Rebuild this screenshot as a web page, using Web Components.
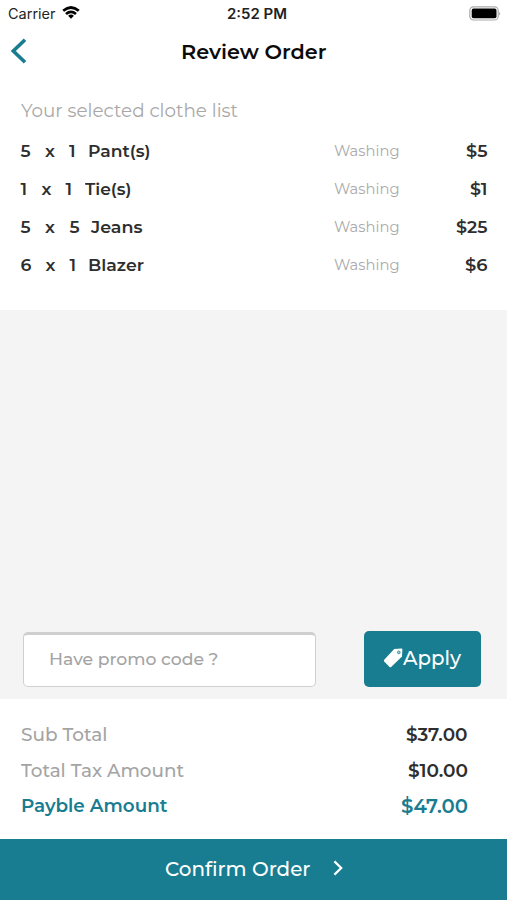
<!DOCTYPE html>
<html lang="en">
<head>
<meta charset="utf-8">
<title>Review Order</title>
<style>
html,body{margin:0;height:100%}
body{font-family:Montserrat,Inter,"Liberation Sans",sans-serif;color:#2e2e2e;background:#fff;overflow:hidden}
</style>
</head>
<body>
<review-page></review-page>
<script>
const define = (name, html, setup) => customElements.define(name, class extends HTMLElement {
  connectedCallback() {
    if (this.shadowRoot) return;
    const t = document.createElement('template');
    t.innerHTML = html;
    this.attachShadow({mode: 'open'}).append(t.content.cloneNode(true));
    if (setup) setup(this, this.shadowRoot);
  }
});

// One line of text; "s" is the font size, and "w", when given, the width it is stretched to.
define('fit-text', `<style>
:host{display:inline-block;white-space:pre;line-height:24px;height:24px;flex:none}
span{display:inline-block;transform-origin:0 50%}
</style><span><slot></slot></span>`, (el, root) => {
  el.style.fontSize = el.getAttribute('s') + 'px';
  const w = +el.getAttribute('w');
  if (!w) return;
  el.style.width = w + 'px';
  const span = root.querySelector('span');
  span.style.transform = `scaleX(${w / span.getBoundingClientRect().width})`;
});

define('status-bar', `<style>
:host{display:flex;align-items:center;height:28px;padding:0 6px 0 8px;box-sizing:border-box;color:#222;font-family:Inter,sans-serif}
div{flex:1;display:flex;align-items:center}
.r{justify-content:flex-end}
b{font-weight:600;margin-left:4px}
svg{display:block}
.w{margin:-3px 0 0 6px}
.r svg{margin-top:-2px}
</style>
<div><fit-text w="47.5" s="14">Carrier</fit-text>
<svg class="w" width="18" height="13" viewBox="0 0 18 13" fill="none" stroke="#000" stroke-width="2.7"><path d="M1.2 4.8Q9-1.8 16.8 4.8M4 8Q9 3.8 14 8"/><path d="M6.1 9.8Q9 7.4 11.9 9.8L9 12.7Z" fill="#000" stroke="none"/></svg></div>
<b><fit-text w="60" s="14">2:52 PM</fit-text></b>
<div class="r"><svg width="32" height="15" viewBox="0 0 32 15"><rect x=".8" y=".8" width="28.4" height="13.2" rx="3.8" fill="#fff" stroke="#aaa" stroke-width="1.2"/><rect x="2.7" y="2.6" width="24.8" height="9.6" rx="1.8"/><path d="M30.3 5.5q1.5 2 0 4z" fill="#888"/></svg></div>`);

define('nav-header', `<style>
:host{display:grid;grid-template-columns:1fr auto 1fr;align-items:center;height:48px;color:#0b0b0b;font-weight:600}
svg{display:block;margin:-2px 0 0 9px}
</style>
<svg width="18" height="28" viewBox="0 0 18 28" fill="none" stroke="#187d90" stroke-width="3.6"><path d="M16 2.7 4.3 14 16 25.3"/></svg>
<fit-text w="145.5" s="20.6"><slot></slot></fit-text><i></i>`);

define('order-row', `<style>
:host{display:flex;height:38px;align-items:center;font-weight:600;padding:0 20px 0 20.5px}
.words{display:grid;grid-template-columns:var(--cols);width:313px}
.service{color:#aaa;font-weight:400}
.price{margin-left:auto}
</style>
<div class="words"></div><div class="service"><fit-text w="65.5" s="15.2">Washing</fit-text></div><div class="price"></div>`, (el, root) => {
  const fit = (t, w) => `<fit-text w="${w}" s="17.3">${t}</fit-text>`;
  const g = n => el.getAttribute(n);
  root.querySelector('.words').innerHTML = [g('qty'), 'x', g('count')].map(t => fit(t, 0)).join('') + fit(g('item'), g('iw'));
  root.querySelector('.price').innerHTML = fit(g('price'), g('pw'));
});

define('order-list', `<style>
:host{display:block;height:234px;box-sizing:border-box;padding-top:23px}
h2{margin:0 0 9px 20.5px;font-weight:400;color:#a8a8a8;height:24px;display:flex}
</style><h2><fit-text w="217" s="18.7">Your selected clothe list</fit-text></h2><slot></slot>`);

define('promo-form', `<style>
:host{display:flex;flex:1;align-items:flex-end;justify-content:space-between;background:#f4f4f4;padding:0 26px 12px 23px}
.field,.btn{box-sizing:border-box;display:flex;align-items:center;border-radius:5px}
.field{width:293px;height:55px;background:#fff;border:1.5px solid #d0d0d0;border-top:3px solid #cfcfcf;padding:0 0 4px 24.5px;color:#a4a4a4;font-weight:500}
.btn{width:117px;height:56px;background:#187d90;color:#fff;font-weight:500;padding:0 0 2px 19px}
svg{display:block;flex:none}
</style>
<div class="field"><fit-text w="169.5" s="17.2">Have promo code ?</fit-text></div>
<div class="btn"><svg width="20" height="22" viewBox="0 0 20 22"><path d="M11.2 2 18.3 1.6Q19.4 1.6 19.4 2.7L19 9.4 8.2 19.9Q7.4 20.6 6.6 19.9L1.2 14.4Q.5 13.5 1.2 12.7Z" fill="#fff"/><circle cx="15.8" cy="5.4" r="1.4" fill="#9ccbd3" stroke="#187d90" stroke-width=".7"/></svg><fit-text w="58" s="19.5">Apply</fit-text></div>`);

define('total-row', `<style>
:host{display:flex;justify-content:space-between;align-items:center;height:35.5px;padding:0 39.5px 0 20.5px;color:#a4a4a4;font-weight:500}
.v{color:#2e2e2e;font-weight:600}
:host([strong]),:host([strong]) .v{color:#187d90;font-weight:600}
</style><slot></slot><div class="v"><slot name="v"></slot></div>`);

define('totals-panel', `<style>:host{display:block;height:140px;box-sizing:border-box;padding-top:18.5px}</style><slot></slot>`);

define('confirm-bar', `<style>
:host{display:flex;align-items:center;height:61px;box-sizing:border-box;background:#187d90;color:#fff;font-weight:500;padding:0 0 1px 165px}
svg{margin:-3px 0 0 22px}
</style><fit-text w="145.5" s="19.5"><slot></slot></fit-text>
<svg width="12" height="16" viewBox="0 0 12 16" fill="none" stroke="#fff" stroke-width="2.2"><path d="M1.4 1.4 8.2 8 1.4 14.6"/></svg>`);

define('review-page', `<style>:host{display:flex;flex-direction:column;width:507px;height:900px;overflow:hidden}
status-bar,nav-header,order-list,totals-panel,confirm-bar{flex:none}</style>
<status-bar></status-bar>
<nav-header>Review Order</nav-header>
<order-list>
<order-row style="--cols:24.5px 24px 19px 1fr" qty="5" count="1" item="Pant(s)" iw="62.5" price="$5" pw="21.5"></order-row>
<order-row style="--cols:21px 24px 19.5px 1fr" qty="1" count="1" item="Tie(s)" iw="46.5" price="$1" pw="17.5"></order-row>
<order-row style="--cols:24.5px 24.5px 21.5px 1fr" qty="5" count="5" item="Jeans" iw="51.5" price="$25" pw="31.5"></order-row>
<order-row style="--cols:25px 24px 18.5px 1fr" qty="6" count="1" item="Blazer" iw="56" price="$6" pw="22.5"></order-row>
</order-list>
<promo-form></promo-form>
<totals-panel>
<total-row><fit-text w="86.5" s="18.2">Sub Total</fit-text><fit-text slot="v" w="61.5" s="18.2">$37.00</fit-text></total-row>
<total-row><fit-text w="163" s="18.2">Total Tax Amount</fit-text><fit-text slot="v" w="60" s="18.2">$10.00</fit-text></total-row>
<total-row strong><fit-text w="146.5" s="18.2">Payble Amount</fit-text><fit-text slot="v" w="67" s="19.4">$47.00</fit-text></total-row>
</totals-panel>
<confirm-bar>Confirm Order</confirm-bar>`);
</script>
</body>
</html>
